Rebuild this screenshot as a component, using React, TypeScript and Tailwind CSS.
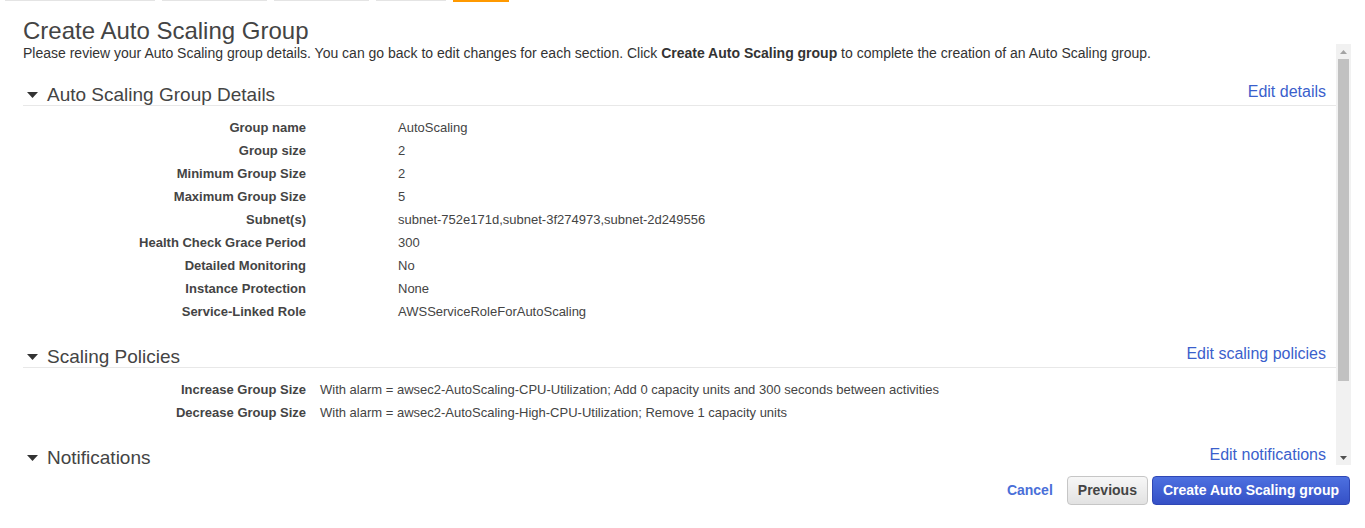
import React from "react";

const Triangle = () => (
  <svg width="11" height="6" viewBox="0 0 11 6" className="shrink-0">
    <polygon points="0,0 11,0 5.5,6" fill="#333" />
  </svg>
);

function Header({ title, edit }: { title: string; edit: string }) {
  return (
    <div className="flex items-end justify-between border-b border-[#e8e8e8] pr-[10px] h-[23px]">
      <div className="flex items-center gap-[9px] pl-[4px] pt-[2px] h-[22px]">
        <Triangle />
        <span className="text-[19px] leading-[20px] text-[#444]">{title}</span>
      </div>
      <a className="text-[16px] leading-[16px] mb-[5px] text-[#3b5fcc] cursor-pointer">{edit}</a>
    </div>
  );
}

function Rows({ rows, gap }: { rows: [string, string][]; gap: string }) {
  return (
    <div className="flex flex-col">
      {rows.map(([k, v]) => (
        <div key={k} className={`flex h-[23px] items-center text-[13px] ${gap}`}>
          <div className="w-[283px] text-right font-bold text-[#444]">{k}</div>
          <div className="text-[#444]">{v}</div>
        </div>
      ))}
    </div>
  );
}

export default function App() {
  const details: [string, string][] = [
    ["Group name", "AutoScaling"],
    ["Group size", "2"],
    ["Minimum Group Size", "2"],
    ["Maximum Group Size", "5"],
    ["Subnet(s)", "subnet-752e171d,subnet-3f274973,subnet-2d249556"],
    ["Health Check Grace Period", "300"],
    ["Detailed Monitoring", "No"],
    ["Instance Protection", "None"],
    ["Service-Linked Role", "AWSServiceRoleForAutoScaling"],
  ];
  const policies: [string, string][] = [
    [
      "Increase Group Size",
      "With alarm = awsec2-AutoScaling-CPU-Utilization; Add 0 capacity units and 300 seconds between activities",
    ],
    [
      "Decrease Group Size",
      "With alarm = awsec2-AutoScaling-High-CPU-Utilization; Remove 1 capacity units",
    ],
  ];
  return (
    <div className="w-[1365px] h-[528px] bg-white overflow-hidden font-['Liberation_Sans',Arial,sans-serif] text-[#444]">
      {/* wizard step bars */}
      <div className="flex gap-[7px] pl-[5px] h-[2px]">
        <div className="w-[150px] h-[1px] bg-[#e4e4e4]" />
        <div className="w-[105px] h-[1px] bg-[#e4e4e4]" />
        <div className="w-[95px] h-[1px] bg-[#e4e4e4]" />
        <div className="w-[70px] h-[1px] bg-[#e4e4e4]" />
        <div className="w-[56px] h-[2px] bg-[#f90]" />
      </div>
      <h1 className="mt-[15px] pl-[23px] text-[24px] leading-[28px] text-[#444]">
        Create Auto Scaling Group
      </h1>
      <div className="flex w-[1351px] h-[421px] -mt-[1px]">
        <div className="flex-1 overflow-hidden pl-[23px]">
          <p className="text-[14px] leading-[17px] mt-[1px] text-[#333]">
            Please review your Auto Scaling group details. You can go back to edit changes for each section. Click{" "}
            <b>Create Auto Scaling group</b> to complete the creation of an Auto Scaling group.
          </p>
          <div className="mt-[21px]">
            <Header title="Auto Scaling Group Details" edit="Edit details" />
            <div className="mt-[10px]">
              <Rows rows={details} gap="gap-[92px]" />
            </div>
          </div>
          <div className="mt-[22px]">
            <Header title="Scaling Policies" edit="Edit scaling policies" />
            <div className="mt-[10px]">
              <Rows rows={policies} gap="gap-[14px]" />
            </div>
          </div>
          <div className="mt-[22px]">
            <Header title="Notifications" edit="Edit notifications" />
          </div>
        </div>
        {/* scrollbar */}
        <div className="w-[15px] bg-[#f1f1f1] flex flex-col items-center">
          <div className="h-[15px] flex items-center justify-center">
            <svg width="7" height="4" viewBox="0 0 7 4">
              <polygon points="3.5,0 7,4 0,4" fill="#a3a3a3" />
            </svg>
          </div>
          <div className="w-[11px] h-[322px] bg-[#c1c1c1]" />
          <div className="flex-1" />
          <div className="h-[15px] flex items-center justify-center">
            <svg width="7" height="4" viewBox="0 0 7 4">
              <polygon points="0,0 7,0 3.5,4" fill="#505050" />
            </svg>
          </div>
        </div>
      </div>
      <div className="flex justify-end items-center w-[1350px] mt-[11px] gap-[4px]">
        <a className="text-[14px] font-bold text-[#4a6fd8] mr-[10px] cursor-pointer">Cancel</a>
        <button className="h-[29px] px-[10px] text-[14px] font-bold text-[#444] rounded-[4px] border border-[#c6c6c6] bg-gradient-to-b from-[#f7f7f7] to-[#e2e2e2]">
          Previous
        </button>
        <button className="h-[29px] px-[10px] text-[14px] font-bold text-white rounded-[4px] border border-[#2f47b5] bg-gradient-to-b from-[#4d70e0] to-[#3550c6]">
          Create Auto Scaling group
        </button>
      </div>
    </div>
  );
}
